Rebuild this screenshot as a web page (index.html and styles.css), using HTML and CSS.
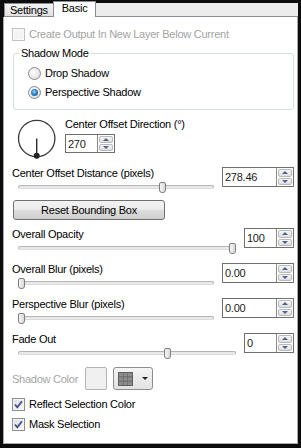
FILE: index.html
```html
<!DOCTYPE html>
<html>
<head>
<meta charset="utf-8">
<link rel="stylesheet" href="styles.css">
</head>
<body>
<div class="frame">
  <div class="tabs">
    <div class="tab tab-inactive">Settings</div>
    <div class="tab tab-active">Basic</div>
    <div class="tab-fill"></div>
  </div>
  <div class="panel">
    <div class="check disabled top-check"><span class="box"></span><span>Create Output In New Layer Below Current</span></div>

    <div class="group">
      <span class="legend">Shadow Mode</span>
      <div class="radio"><span class="rb"></span><span>Drop Shadow</span></div>
      <div class="radio"><span class="rb on"></span><span>Perspective Shadow</span></div>
    </div>

    <div class="dial-row">
      <svg class="dial" width="42" height="42" viewBox="0 0 42 42">
        <circle cx="20.7" cy="19.5" r="18.2" fill="none" stroke="#3a3a3a" stroke-width="1.3"/>
        <line x1="20.7" y1="19.5" x2="20.7" y2="36.7" stroke="#2a2a2a" stroke-width="1.4"/>
        <circle cx="20.7" cy="36.7" r="3" fill="#222"/>
      </svg>
      <div class="dial-ctrl">
        <div class="lbl">Center Offset Direction (°)</div>
        <div class="spin narrow short"><div class="val">270</div><div class="btns"><span class="sb"><i class="up"></i></span><span class="sb"><i class="dn"></i></span></div></div>
      </div>
    </div>

    <div class="srow first">
      <div class="scol">
        <div class="lbl">Center Offset Distance (pixels)</div>
        <div class="slider"><div class="track"></div><span class="thumb" style="left:141px"></span></div>
      </div>
      <div class="spin wide"><div class="val">278.46</div><div class="btns"><span class="sb"><i class="up"></i></span><span class="sb"><i class="dn"></i></span></div></div>
    </div>

    <div class="btn">Reset Bounding Box</div>

    <div class="srow after-btn">
      <div class="scol">
        <div class="lbl">Overall Opacity</div>
        <div class="slider"><div class="track"></div><span class="thumb" style="left:211px"></span></div>
      </div>
      <div class="spin narrow"><div class="val">100</div><div class="btns"><span class="sb"><i class="up"></i></span><span class="sb"><i class="dn"></i></span></div></div>
    </div>

    <div class="srow">
      <div class="scol">
        <div class="lbl">Overall Blur (pixels)</div>
        <div class="slider"><div class="track"></div><span class="thumb" style="left:0px"></span></div>
      </div>
      <div class="spin wide"><div class="val">0.00</div><div class="btns"><span class="sb"><i class="up"></i></span><span class="sb"><i class="dn"></i></span></div></div>
    </div>

    <div class="srow">
      <div class="scol">
        <div class="lbl">Perspective Blur (pixels)</div>
        <div class="slider"><div class="track"></div><span class="thumb" style="left:0px"></span></div>
      </div>
      <div class="spin wide"><div class="val">0.00</div><div class="btns"><span class="sb"><i class="up"></i></span><span class="sb"><i class="dn"></i></span></div></div>
    </div>

    <div class="srow">
      <div class="scol">
        <div class="lbl">Fade Out</div>
        <div class="slider"><div class="track"></div><span class="thumb" style="left:146px"></span></div>
      </div>
      <div class="spin narrow"><div class="val">0</div><div class="btns"><span class="sb"><i class="up"></i></span><span class="sb"><i class="dn"></i></span></div></div>
    </div>

    <div class="crow">
      <span class="clbl">Shadow Color</span>
      <span class="swatch"></span>
      <span class="dropdown">
        <svg width="15" height="14" viewBox="0 0 15 14">
          <rect x="0" y="0" width="15" height="14" fill="#5e5e5e"/>
          <rect x="1" y="1" width="4" height="3.5" fill="#8c8c8c"/>
          <rect x="5.5" y="1" width="4" height="3.5" fill="#8c8c8c"/>
          <rect x="10" y="1" width="4" height="3.5" fill="#8c8c8c"/>
          <rect x="1" y="5.25" width="4" height="3.5" fill="#8c8c8c"/>
          <rect x="5.5" y="5.25" width="4" height="3.5" fill="#8c8c8c"/>
          <rect x="10" y="5.25" width="4" height="3.5" fill="#8c8c8c"/>
          <rect x="1" y="9.5" width="4" height="3.5" fill="#8c8c8c"/>
          <rect x="5.5" y="9.5" width="4" height="3.5" fill="#8c8c8c"/>
          <rect x="10" y="9.5" width="4" height="3.5" fill="#8c8c8c"/>
        </svg>
        <i class="caret"></i>
      </span>
    </div>

    <div class="check checked reflect"><span class="box"><svg width="11" height="11" viewBox="0 0 11 11"><path d="M2 5.5 L4.3 8.3 L9 2.3" fill="none" stroke="#3d4f95" stroke-width="1.8"/></svg></span><span>Reflect Selection Color</span></div>
    <div class="check checked mask"><span class="box"><svg width="11" height="11" viewBox="0 0 11 11"><path d="M2 5.5 L4.3 8.3 L9 2.3" fill="none" stroke="#3d4f95" stroke-width="1.8"/></svg></span><span>Mask Selection</span></div>
  </div>
</div>
</body>
</html>
```
FILE: styles.css
```css
* { box-sizing: border-box; }
html, body { margin: 0; padding: 0; }
body {
  background: #0c0c0c;
  width: 301px;
  height: 448px;
  overflow: hidden;
  font-family: "Liberation Sans", Arial, sans-serif;
  font-size: 11px;
  letter-spacing: -0.25px;
  color: #000;
}
.frame {
  display: flex;
  flex-direction: column;
  height: 448px;
  padding: 1px 3px 4px 3px;
}
.tabs {
  display: flex;
  align-items: flex-end;
  height: 16px;
  padding-left: 1px;
}
.tab {
  border: 1px solid #898c95;
  white-space: nowrap;
}
.tab-inactive {
  height: 14px;
  padding: 0 5px;
  line-height: 13px;
  background: linear-gradient(#f3f3f3, #e1e1e1);
}
.tab-active {
  position: relative;
  height: 16px;
  margin-left: -1px;
  padding: 0 8px;
  line-height: 12px;
  background: #fff;
  border-bottom: none;
}
.tab-fill {
  flex: 1;
  height: 14px;
  background: #ececec;
  border-bottom: 1px solid #898c95;
}
.panel {
  flex: 1;
  display: flex;
  flex-direction: column;
  background: #fff;
  border: 1px solid #a9a9a9;
  border-top: none;
  padding: 0 3px 0 8px;
}

/* checkboxes */
.check {
  display: flex;
  align-items: center;
  height: 13px;
  gap: 4px;
  white-space: nowrap;
  line-height: 13px;
}
.check .box {
  width: 13px;
  height: 13px;
  flex: none;
  border: 1px solid #8e8f8f;
  background: linear-gradient(135deg, #dcdcdc, #fdfdfd);
  box-shadow: inset 0 0 0 1px #f4f4f4;
  display: flex;
  align-items: center;
  justify-content: center;
}
.check.disabled { color: #a3a3a3; }
.check.disabled .box {
  border-color: #c2c2c2;
  background: #f4f4f4;
  box-shadow: inset 0 0 0 1px #fafafa;
}
.top-check { margin-top: 11px; }
.reflect { margin-top: 8px; }
.mask { margin-top: 7px; }

/* group box */
.group {
  position: relative;
  margin: 12px 0 0 1px;
  border: 1px solid #d5dfe5;
  border-radius: 3px;
  padding: 13px 0 10px 14px;
}
.legend {
  position: absolute;
  top: -7px;
  left: 5px;
  padding: 0 2px;
  background: #fff;
  line-height: 13px;
}
.radio {
  display: flex;
  align-items: center;
  height: 13px;
  gap: 4px;
  line-height: 13px;
}
.radio + .radio { margin-top: 6px; }
.rb {
  width: 13px;
  height: 13px;
  flex: none;
  border-radius: 50%;
  border: 1px solid #8a8a8a;
  background: radial-gradient(circle at 40% 40%, #ffffff 0%, #e6e6e6 60%, #cfcfcf 100%);
  display: flex;
  align-items: center;
  justify-content: center;
}
.rb.on::after {
  content: "";
  width: 7px;
  height: 7px;
  border-radius: 50%;
  background: radial-gradient(circle at 45% 40%, #bfe3ff 0%, #3b8fd6 35%, #124a8a 100%);
}

/* dial */
.dial-row {
  display: flex;
  align-items: flex-start;
  margin-top: 8px;
}
.dial {
  display: block;
  margin: 1px 0 0 4px;
  flex: none;
}
.dial-ctrl {
  margin-left: 7px;
}
.lbl {
  height: 13px;
  line-height: 13px;
  white-space: nowrap;
}
.dial-ctrl .spin { margin-top: 3px; }

/* spin boxes */
.spin {
  display: flex;
  height: 20px;
  border: 1px solid #6f6f6f;
  background: #fff;
}
.spin.short { height: 19px; }
.spin.wide { width: 72px; }
.spin.narrow { width: 50px; }
.spin .val {
  flex: 1;
  padding-left: 2px;
  display: flex;
  align-items: center;
  color: #1a1a1a;
}
.spin .btns {
  width: 17px;
  flex: none;
  display: flex;
  flex-direction: column;
  gap: 1px;
  padding: 1px;
  border-left: 1px solid #8a8a8a;
}
.sb {
  flex: 1;
  border: 1px solid #b9b9b9;
  border-radius: 2px;
  background: linear-gradient(#f7f7f7, #dedede);
  display: flex;
  align-items: center;
  justify-content: center;
}
.sb .up, .sb .dn {
  width: 0;
  height: 0;
  border-left: 3px solid transparent;
  border-right: 3px solid transparent;
}
.sb .up { border-bottom: 3px solid #4f6190; }
.sb .dn { border-top: 3px solid #4f6190; }

/* slider rows */
.srow {
  display: grid;
  grid-template-columns: 1fr auto;
  align-items: start;
  margin-top: 6px;
}
.srow.after-btn { margin-top: 8px; }
.slider {
  position: relative;
  height: 16px;
  padding-top: 5px;
  margin: 0 8px 0 6px;
}
.track {
  height: 4px;
  border: 1px solid #b4b4b4;
  border-bottom-color: #dcdcdc;
  border-radius: 2px;
  background: #e9e9e9;
}
.thumb {
  position: absolute;
  top: 2px;
  width: 7px;
  height: 11px;
  border: 1px solid #7d7d7d;
  border-radius: 2px 2px 3px 3px;
  background: linear-gradient(90deg, #f6f6f6, #d9d9d9);
}

/* button */
.btn {
  margin: 4px 0 0 1px;
  width: 152px;
  height: 20px;
  border: 1px solid #707070;
  border-radius: 3px;
  background: linear-gradient(#f2f2f2 0%, #ebebeb 50%, #dddddd 51%, #cfcfcf 100%);
  text-align: center;
  line-height: 18px;
}

/* shadow color */
.crow {
  display: flex;
  align-items: center;
  height: 23px;
  margin-top: 5px;
}
.clbl {
  width: 73px;
  color: #a3a3a3;
  white-space: nowrap;
}
.swatch {
  width: 22px;
  height: 23px;
  border: 1px solid #b3b3b3;
  border-radius: 2px;
  background: #f0f0f0;
}
.dropdown {
  margin-left: 6px;
  width: 40px;
  height: 23px;
  border: 1px solid #8d8d8d;
  border-radius: 3px;
  background: linear-gradient(#f4f4f4, #e2e2e2);
  display: flex;
  align-items: center;
  padding-left: 4px;
}
.dropdown svg { display: block; }
.caret {
  margin-left: 9px;
  width: 0;
  height: 0;
  border-left: 3px solid transparent;
  border-right: 3px solid transparent;
  border-top: 3px solid #222;
}
```
